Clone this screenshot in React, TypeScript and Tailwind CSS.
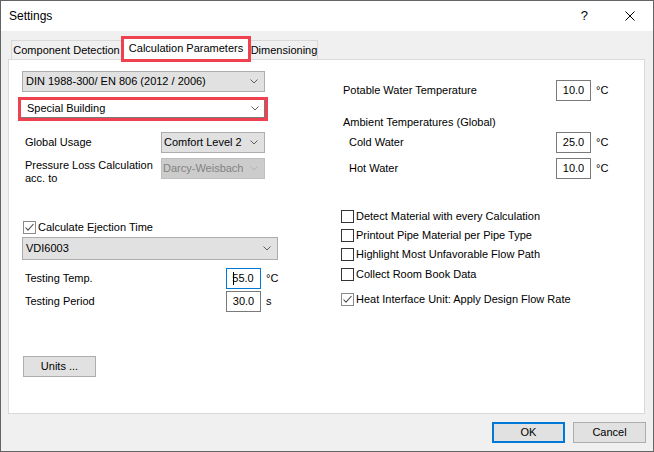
import React from "react";

function Chevron({ color = "#5f5f5f" }: { color?: string }) {
  return (
    <svg width="8" height="5" viewBox="0 0 8 5" className="shrink-0">
      <path d="M0.5 0.5 L4 4 L7.5 0.5" fill="none" stroke={color} strokeWidth="1" />
    </svg>
  );
}

function Combo({
  value,
  className = "",
  disabled = false,
}: {
  value: string;
  className?: string;
  disabled?: boolean;
}) {
  return (
    <div
      className={`flex items-center justify-between border pr-[6px] ${
        disabled
          ? "bg-[#cccccc] border-[#bfbfbf] text-[#838383]"
          : "bg-[#e1e1e1] border-[#adadad]"
      } ${className}`}
    >
      <span className="whitespace-nowrap">{value}</span>
      <Chevron color={disabled ? "#b4b4b4" : "#5f5f5f"} />
    </div>
  );
}

function NumBox({ value, focused = false }: { value: string; focused?: boolean }) {
  return (
    <div
      className={`w-[35px] h-[21px] border bg-white flex items-center justify-center shrink-0 ${
        focused ? "border-[#0078d7]" : "border-[#7a7a7a]"
      }`}
    >
      {focused && <span className="w-px h-[13px] bg-black -mr-[2px] relative z-10" />}
      <span>{value}</span>
    </div>
  );
}

function Check({ label, checked = false, className = "" }: { label: string; checked?: boolean; className?: string }) {
  return (
    <div className={`flex items-center h-[13px] gap-[2px] ${className}`}>
      <span
        className={`w-[13px] h-[13px] border bg-white flex items-center justify-center shrink-0 ${
          checked ? "border-[#8a8a8a]" : "border-[#333333]"
        }`}
      >
        {checked && (
          <svg width="11" height="11" viewBox="0 0 11 11">
            <path d="M1.5 5.5 L4 8.2 L9.5 2" fill="none" stroke="#4d4d4d" strokeWidth="1.1" />
          </svg>
        )}
      </span>
      <span className="whitespace-nowrap">{label}</span>
    </div>
  );
}

function NumRow({
  label,
  value,
  unit,
  labelWidth,
  focused = false,
  className = "",
  labelClass = "pl-[3px]",
}: {
  label: string;
  value: string;
  unit: string;
  labelWidth: string;
  focused?: boolean;
  className?: string;
  labelClass?: string;
}) {
  return (
    <div className={`flex items-center h-[21px] ${className}`}>
      <span className={`${labelWidth} ${labelClass} whitespace-nowrap`}>{label}</span>
      <NumBox value={value} focused={focused} />
      <span className="ml-[5px]">{unit}</span>
    </div>
  );
}

export default function App() {
  return (
    <div className="w-[654px] h-[452px] border border-[#646464] bg-[#f0f0f0] flex flex-col font-['Liberation_Sans',Arial,sans-serif] text-[11px] text-black overflow-hidden">
      {/* Title bar */}
      <div className="h-[30px] bg-white flex items-center pl-[8px] pr-[18px] shrink-0">
        <span className="text-[12px]">Settings</span>
        <div className="flex-1" />
        <span className="text-[13px] mr-[37px]">?</span>
        <svg width="10" height="10" viewBox="0 0 10 10">
          <path d="M0.5 0.5 L9.5 9.5 M9.5 0.5 L0.5 9.5" stroke="#000" strokeWidth="1" />
        </svg>
      </div>

      {/* Tabs */}
      <div className="flex items-end h-[28px] pl-[10px] shrink-0">
        <div className="w-[110px] h-[19px] border-t border-l border-[#d9d9d9] flex items-center justify-center whitespace-nowrap">
          Component Detection
        </div>
        <div className="w-[130px] h-[26px] -mb-[3px] border-[3px] border-[#ef4150] bg-white relative z-10 flex items-center justify-center pb-[2px] whitespace-nowrap">
          Calculation Parameters
        </div>
        <div className="w-[67px] h-[19px] border-t border-r border-[#d9d9d9] flex items-center justify-center whitespace-nowrap">
          Dimensioning
        </div>
      </div>

      {/* Panel */}
      <div className="ml-[7px] w-[637px] h-[355px] border border-[#d9d9d9] bg-white flex pl-[13px] shrink-0">
        {/* Left column */}
        <div className="w-[257px] flex flex-col">
          <Combo value="DIN 1988-300/ EN 806 (2012 / 2006)" className="mt-[11px] w-[243px] h-[21px] pl-[3px]" />
          <div className="mt-[5px] -ml-[4px] w-[250px] h-[24px] border-[3px] border-[#ef4150] bg-white">
            <div className="h-full border-r border-b border-[#7a7a7a] flex items-center justify-between pl-[6px] pr-[5px]">
              <span>Special Building</span>
              <Chevron />
            </div>
          </div>

          <div className="mt-[11px] flex items-center h-[21px]">
            <span className="pl-[3px] w-[139px]">Global Usage</span>
            <Combo value="Comfort Level 2" className="w-[104px] h-[21px] pl-[2px]" />
          </div>
          <div className="mt-[5px] flex items-start">
            <span className="pl-[3px] w-[139px] leading-[13px] pt-[1px]">
              Pressure Loss Calculation
              <br />
              acc. to
            </span>
            <Combo value="Darcy-Weisbach" disabled className="w-[104px] h-[21px] pl-[1px]" />
          </div>

          <Check label="Calculate Ejection Time" checked className="mt-[36px] ml-[1px]" />
          <Combo value="VDI6003" className="mt-[3px] w-[256px] h-[23px] pl-[3px]" />

          <NumRow label="Testing Temp." value="55.0" unit="°C" labelWidth="w-[204px]" focused className="mt-[8px]" />
          <NumRow label="Testing Period" value="30.0" unit="s" labelWidth="w-[204px]" className="mt-[2px]" />

          <button className="mt-[44px] ml-[1px] w-[73px] h-[21px] bg-[#e1e1e1] border border-[#adadad] flex items-center justify-center">
            Units ...
          </button>
        </div>

        {/* Right column */}
        <div className="ml-[62px] flex flex-col">
          <NumRow
            label="Potable Water Temperature"
            value="10.0"
            unit="°C"
            labelWidth="w-[215px]"
            labelClass="pl-[2px]"
            className="mt-[20px]"
          />
          <span className="mt-[14px] pl-[2px] leading-[14px]">Ambient Temperatures (Global)</span>
          <NumRow label="Cold Water" value="25.0" unit="°C" labelWidth="w-[215px]" labelClass="pl-[8px]" className="mt-[3px]" />
          <NumRow label="Hot Water" value="10.0" unit="°C" labelWidth="w-[215px]" labelClass="pl-[8px]" className="mt-[5px]" />

          <Check label="Detect Material with every Calculation" className="mt-[31px]" />
          <Check label="Printout Pipe Material per Pipe Type" className="mt-[6px]" />
          <Check label="Highlight Most Unfavorable Flow Path" className="mt-[6px]" />
          <Check label="Collect Room Book Data" className="mt-[7px]" />
          <Check label="Heat Interface Unit: Apply Design Flow Rate" checked className="mt-[12px]" />
        </div>
      </div>

      {/* Footer */}
      <div className="flex justify-end gap-[8px] pr-[7px] mt-[8px]">
        <button className="w-[73px] h-[21px] bg-[#e1e1e1] border-2 border-[#0078d7] flex items-center justify-center">
          OK
        </button>
        <button className="w-[73px] h-[21px] bg-[#e1e1e1] border border-[#adadad] flex items-center justify-center">
          Cancel
        </button>
      </div>
    </div>
  );
}
